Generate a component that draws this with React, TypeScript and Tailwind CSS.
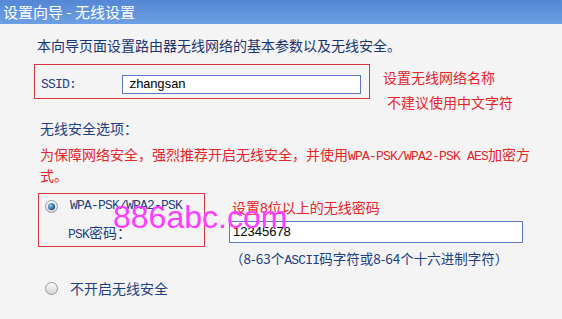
import React from "react";

const mono = "font-['Liberation_Mono','Noto_Sans_CJK_SC',monospace] text-[13px] tracking-[-0.8px]";

function Radio({ checked }: { checked?: boolean }) {
  return (
    <span className="flex h-[13px] w-[13px] shrink-0 items-center justify-center rounded-full border border-[#8f9aa6] bg-linear-to-b from-[#fafafa] to-[#d4d4d4]">
      {checked && (
        <span className="h-[7px] w-[7px] rounded-full bg-[radial-gradient(circle_at_35%_35%,#8fd0f0,#1d4e78_70%)]" />
      )}
    </span>
  );
}

export default function App() {
  return (
    <div className="relative h-[319px] w-[562px] overflow-hidden bg-[#f4f4f4] font-['Noto_Sans_CJK_SC',sans-serif] text-[14px] text-[#1f3a7a]">
      {/* title bar */}
      <div className="h-[24px] bg-linear-to-b from-[#5487d4] to-[#6d9fe3] pl-[3px] text-[15px] leading-[24px] text-white">
        设置向导 - 无线设置
      </div>

      <div className="mt-[11px] h-[20px] pl-[37px] leading-[20px] text-[#1a3470]">
        本向导页面设置路由器无线网络的基本参数以及无线安全。
      </div>

      {/* SSID */}
      <div className="mt-[9px] flex h-[50px] pl-[34px]">
        <div className="h-[35px] w-[336px] border border-[#d8383f] pt-[10px] pl-[6px]">
          <div className="flex h-[19px] items-center">
            <span className={`${mono} w-[81px] text-[#1f3f80]`}>SSID:</span>
            <div className="flex h-[19px] w-[239px] items-center border border-[#5b77c6] bg-white pl-[6px]">
              <span className={`${mono} text-black`}>zhangsan</span>
            </div>
          </div>
        </div>
        <div className="ml-[13px] pt-[1px] leading-[25px] text-[#e5232a]">
          <div className="h-[25px]">设置无线网络名称</div>
          <div className="h-[25px] pl-[4px]">不建议使用中文字符</div>
        </div>
      </div>

      <div className="mt-[4px] h-[20px] pl-[40px] leading-[20px] text-[#1f3f80]">无线安全选项：</div>

      <div className="mt-[6px] pl-[40px] leading-[21px] text-[#e5232a]">
        <div className="h-[21px] whitespace-nowrap">
          为保障网络安全，强烈推荐开启无线安全，并使用<span className={mono}>WPA-PSK/WPA2-PSK AES</span>加密方
        </div>
        <div className="h-[21px]">式。</div>
      </div>

      {/* WPA */}
      <div className="mt-[7px] flex h-[75px] pl-[38px]">
        <div className="h-[54px] w-[167px] border border-[#d8383f] pt-[2px] pl-[6px]">
          <div className="flex h-[20px] items-center">
            <Radio checked />
            <span className={`${mono} ml-[12px] text-[#1f3f80]`}>WPA-PSK/WPA2-PSK</span>
          </div>
          <div className="mt-[6px] ml-[23px] h-[20px] leading-[20px] text-[#1f3f80]">
            <span className={mono}>PSK</span>密码：
          </div>
        </div>
        <div className="ml-[24px] pt-[4px]">
          <div className="h-[20px] pl-[3px] leading-[20px] text-[#e5232a]">
            设置<span className="font-['Liberation_Sans',sans-serif]">8</span>位以上的无线密码
          </div>
          <div className="mt-[4px] flex h-[22px] w-[294px] items-center border border-[#5b77c6] bg-white pl-[3px] font-['Liberation_Sans',sans-serif] text-[13px] text-black">
            12345678
          </div>
          <div className="mt-[5px] h-[20px] pl-[1px] text-[13.5px] leading-[20px] text-[#1f3f80]">
            （8-63个<span className={mono}>ASCII</span>码字符或8-64个十六进制字符）
          </div>
        </div>
      </div>

      <div className="mt-[10px] flex h-[20px] items-center pl-[45px] text-[#1f3f80]">
        <Radio />
        <span className="ml-[12px]">不开启无线安全</span>
      </div>

      {/* watermark */}
      <div className="pointer-events-none absolute top-[201px] left-[113px] font-['Liberation_Sans',sans-serif] text-[32px] leading-none text-[#ff3cff]">
        886abc.com
      </div>
    </div>
  );
}
